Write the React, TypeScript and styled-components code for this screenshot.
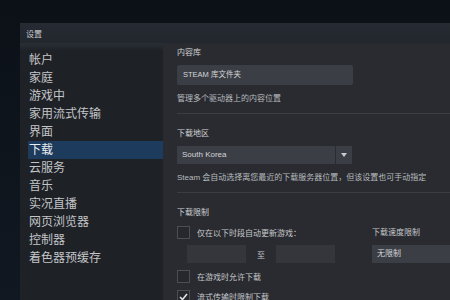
import React from "react";
import styled, { createGlobalStyle } from "styled-components";

const GlobalStyle = createGlobalStyle`
  html, body {
    margin: 0;
    padding: 0;
    background: #0e131a;
    overflow: hidden;
  }
  body {
    font-family: "Liberation Sans", "Noto Sans CJK SC", sans-serif;
  }
`;

const Page = styled.div`
  width: 450px;
  height: 300px;
  padding: 23px 0 0 20px;
  box-sizing: border-box;
  background: linear-gradient(180deg, #0c1118 0%, #111821 100%);
`;

const Window = styled.div`
  display: flex;
  flex-direction: column;
  height: 277px;
  background: #23262c;
`;

const TitleBar = styled.div`
  height: 20px;
  display: flex;
  align-items: center;
  padding-left: 6px;
  font-size: 8px;
  color: #c9ccd0;
  background: linear-gradient(180deg, #262b33 0%, #22262d 100%);
`;

const Body = styled.div`
  flex: 1;
  display: flex;
  min-height: 0;
`;

const Sidebar = styled.nav`
  width: 143px;
  background: linear-gradient(180deg, #2a2f37 0px, #1e2126 8px, #1e2126 100%);
  padding-top: 8px;
  box-sizing: border-box;
`;

const NavItem = styled.div<{ $active?: boolean }>`
  height: 18px;
  line-height: 18px;
  margin-left: 8px;
  padding-left: 1px;
  font-size: 12px;
  color: ${p => (p.$active ? "#e8ecf0" : "#c3c5c8")};
  background: ${p => (p.$active ? "#1d3b5c" : "transparent")};
`;

const Content = styled.main`
  flex: 1;
  background: #292b30;
  padding: 5px 0 0 14px;
  box-sizing: border-box;
  overflow: hidden;
`;

const Section = styled.section`
  padding: 0 0 9px;
  border-bottom: 1px solid #3a3d43;
  margin-bottom: 15px;
`;

const Label = styled.div`
  font-size: 8px;
  color: #d0d2d5;
  height: 10px;
  line-height: 10px;
`;

const Hint = styled.div<{ $gap: number }>`
  font-size: 8px;
  color: #b8bbbf;
  line-height: 10px;
  margin-top: ${p => p.$gap}px;
  white-space: nowrap;
`;

const Button = styled.div`
  margin-top: 7px;
  width: 176px;
  height: 20px;
  line-height: 20px;
  padding-left: 6px;
  box-sizing: border-box;
  font-size: 7.5px;
  color: #d4d6d9;
  background: #3b3e45;
  border-radius: 2px;
`;

const Select = styled.div<{ $w: number }>`
  margin-top: 7px;
  width: ${p => p.$w}px;
  height: 18px;
  display: flex;
  background: #3b3e45;
  box-sizing: border-box;
  font-size: 8px;
  color: #d4d6d9;
`;

const SelectText = styled.div`
  flex: 1;
  line-height: 18px;
  padding-left: 5px;
`;

const SelectArrow = styled.div`
  width: 16px;
  border-left: 1px solid #2a2c31;
  display: flex;
  align-items: center;
  justify-content: center;
`;

const LimitGrid = styled.div`
  display: grid;
  grid-template-columns: 195px 1fr;
  margin-top: 8px;
`;

const Col = styled.div`
  display: flex;
  flex-direction: column;
`;

const CheckRow = styled.div<{ $gap: number }>`
  display: flex;
  align-items: center;
  gap: 7px;
  height: 13px;
  margin-top: ${p => p.$gap}px;
  font-size: 8px;
  color: #c6c8cb;
`;

const Box = styled.div`
  width: 11px;
  height: 11px;
  border: 1px solid #4b4e55;
  background: #26282d;
  display: flex;
  align-items: center;
  justify-content: center;
`;

const TimeRow = styled.div`
  display: flex;
  align-items: center;
  margin: 6px 0 0 10px;
  font-size: 8px;
  color: #c6c8cb;
`;

const TimeInput = styled.div`
  width: 59px;
  height: 18px;
  background: #34363c;
`;

const To = styled.span`
  width: 30px;
  text-align: center;
`;

const SpeedLabel = styled.div`
  font-size: 8px;
  color: #c6c8cb;
  margin-top: 2px;
  height: 10px;
  line-height: 10px;
`;

const navItems = [
  "帐户",
  "家庭",
  "游戏中",
  "家用流式传输",
  "界面",
  "下载",
  "云服务",
  "音乐",
  "实况直播",
  "网页浏览器",
  "控制器",
  "着色器预缓存",
];

function App() {
  return (
    <Page>
      <GlobalStyle />
      <Window>
        <TitleBar>设置</TitleBar>
        <Body>
          <Sidebar>
            {navItems.map(item => (
              <NavItem key={item} $active={item === "下载"}>
                {item}
              </NavItem>
            ))}
          </Sidebar>
          <Content>
            <Section>
              <Label>内容库</Label>
              <Button>STEAM 库文件夹</Button>
              <Hint $gap={9}>管理多个驱动器上的内容位置</Hint>
            </Section>

            <Section>
              <Label>下载地区</Label>
              <Select $w={175}>
                <SelectText>South Korea</SelectText>
                <SelectArrow>
                  <svg width="6" height="4" viewBox="0 0 6 4">
                    <path d="M0 0 L6 0 L3 4 Z" fill="#c8cacd" />
                  </svg>
                </SelectArrow>
              </Select>
              <Hint $gap={9}>Steam 会自动选择离您最近的下载服务器位置，但该设置也可手动指定</Hint>
            </Section>

            <Label>下载限制</Label>
            <LimitGrid>
              <Col>
                <CheckRow $gap={0}>
                  <Box />
                  仅在以下时段自动更新游戏：
                </CheckRow>
                <TimeRow>
                  <TimeInput />
                  <To>至</To>
                  <TimeInput />
                </TimeRow>
              </Col>
              <Col>
                <SpeedLabel>下载速度限制</SpeedLabel>
                <Select $w={90}>
                  <SelectText>无限制</SelectText>
                </Select>
              </Col>
            </LimitGrid>
            <CheckRow $gap={7}>
              <Box />
              在游戏时允许下载
            </CheckRow>
            <CheckRow $gap={7}>
              <Box>
                <svg width="9" height="8" viewBox="0 0 9 8">
                  <path d="M1 4 L3.5 6.5 L8 1" stroke="#e0e2e5" strokeWidth="1.6" fill="none" />
                </svg>
              </Box>
              流式传输时限制下载
            </CheckRow>
          </Content>
        </Body>
      </Window>
    </Page>
  );
}

export default App;
